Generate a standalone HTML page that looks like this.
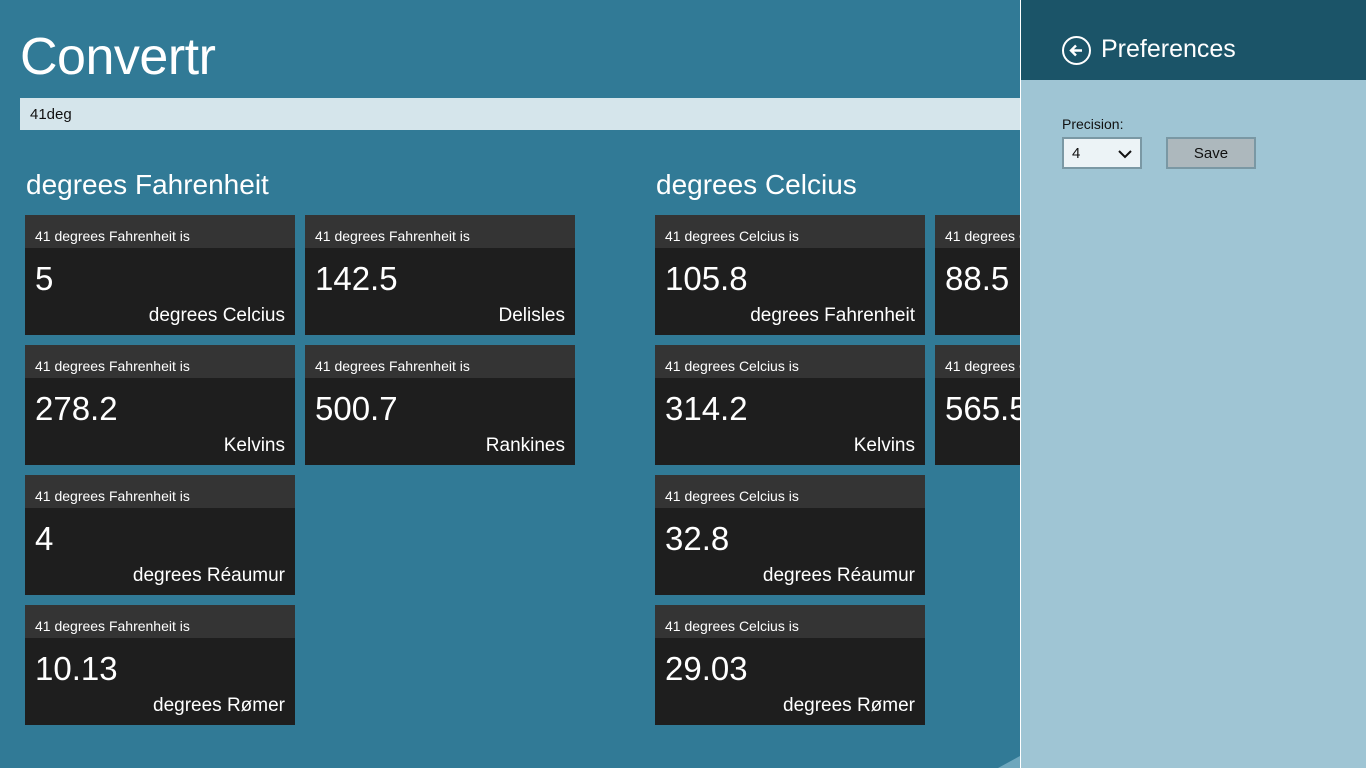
<!DOCTYPE html>
<html><head><meta charset="utf-8"><style>
*{margin:0;padding:0;box-sizing:border-box}
body{width:1366px;height:768px;overflow:hidden;background:#317a96;font-family:"Segoe UI","Liberation Sans",sans-serif;color:#fff;position:relative}
.title{position:absolute;left:20px;top:24px;font-size:52px;line-height:66px;letter-spacing:-0.5px}
.search{position:absolute;left:20px;top:98px;width:1000px;height:32px;background:#d5e5eb;color:#111;font-size:15px;padding:8px 10px}
.gh{position:absolute;top:169px;font-size:28px}
.t{position:absolute;width:270px;height:120px;background:#1e1e1e;overflow:hidden}
.t .h{height:33px;background:#343434;font-size:14px;padding:13px 10px 0}
.t .v{position:absolute;left:10px;top:45px;font-size:33px}
.t .u{position:absolute;right:10px;bottom:8px;font-size:19px}
.panel{position:absolute;left:1020px;top:0;width:346px;height:768px;background:#9fc5d4;border-left:1px solid #fff}
.ph{height:80px;background:#1b5468;position:relative}
.ph .c{position:absolute;left:41px;top:36px;width:29px;height:29px;border:2px solid #fff;border-radius:50%}
.ph span{position:absolute;left:80px;top:35px;font-size:25px}
.lbl{position:absolute;left:41px;top:116px;font-size:14px;color:#111}
.sel{position:absolute;left:41px;top:137px;width:80px;height:32px;background:#ecf3f6;border:2px solid #7a98a4;color:#111;font-size:15px;padding:6px 8px}
.btn{position:absolute;left:145px;top:137px;width:90px;height:32px;background:#adb8bd;border:2px solid #7a98a4;color:#111;font-size:15px;text-align:center;padding-top:6px}
.tri{position:absolute;left:998px;top:756px;width:0;height:0;border-left:22px solid transparent;border-bottom:12px solid #6ea7bd}
</style></head><body>
<div class="title">Convertr</div>
<div class="search">41deg</div>
<div class="gh" style="left:26px">degrees Fahrenheit</div>
<div class="gh" style="left:656px">degrees Celcius</div>

<div class="t" style="left:25px;top:215px"><div class="h">41 degrees Fahrenheit is</div><div class="v">5</div><div class="u">degrees Celcius</div></div>
<div class="t" style="left:305px;top:215px"><div class="h">41 degrees Fahrenheit is</div><div class="v">142.5</div><div class="u">Delisles</div></div>
<div class="t" style="left:25px;top:345px"><div class="h">41 degrees Fahrenheit is</div><div class="v">278.2</div><div class="u">Kelvins</div></div>
<div class="t" style="left:305px;top:345px"><div class="h">41 degrees Fahrenheit is</div><div class="v">500.7</div><div class="u">Rankines</div></div>
<div class="t" style="left:25px;top:475px"><div class="h">41 degrees Fahrenheit is</div><div class="v">4</div><div class="u">degrees Réaumur</div></div>
<div class="t" style="left:25px;top:605px"><div class="h">41 degrees Fahrenheit is</div><div class="v">10.13</div><div class="u">degrees Rømer</div></div>

<div class="t" style="left:655px;top:215px"><div class="h">41 degrees Celcius is</div><div class="v">105.8</div><div class="u">degrees Fahrenheit</div></div>
<div class="t" style="left:935px;top:215px"><div class="h">41 degrees Celcius is</div><div class="v">88.5</div><div class="u">Delisles</div></div>
<div class="t" style="left:655px;top:345px"><div class="h">41 degrees Celcius is</div><div class="v">314.2</div><div class="u">Kelvins</div></div>
<div class="t" style="left:935px;top:345px"><div class="h">41 degrees Celcius is</div><div class="v">565.5</div><div class="u">Rankines</div></div>
<div class="t" style="left:655px;top:475px"><div class="h">41 degrees Celcius is</div><div class="v">32.8</div><div class="u">degrees Réaumur</div></div>
<div class="t" style="left:655px;top:605px"><div class="h">41 degrees Celcius is</div><div class="v">29.03</div><div class="u">degrees Rømer</div></div>
<div class="tri"></div>

<div class="panel">
<div class="ph"><div class="c"><svg width="25" height="25" viewBox="0 0 25 25" style="position:absolute;left:0;top:0"><path d="M18 12.5H7M12 7.5l-5 5 5 5" stroke="#fff" stroke-width="2.4" fill="none"/></svg></div><span>Preferences</span></div>
<div class="lbl">Precision:</div>
<div class="sel">4<svg width="14" height="10" style="position:absolute;right:8px;top:10px"><path d="M1 2l6 6 6-6" stroke="#111" stroke-width="2" fill="none"/></svg></div>
<div class="btn">Save</div>
</div>
</body></html>
